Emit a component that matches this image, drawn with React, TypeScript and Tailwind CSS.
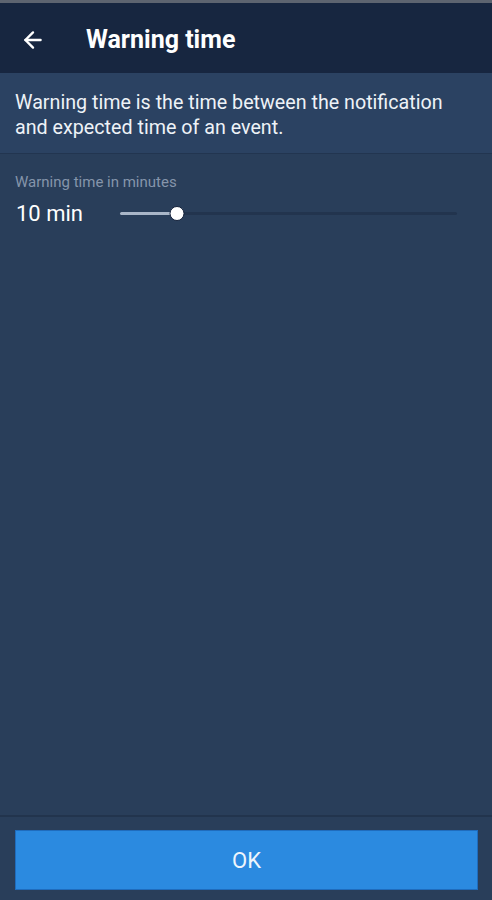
import { ArrowLeft } from 'lucide-react';

export default function App() {
  const value = 10;
  const pct = 17;

  return (
    <div className="h-[900px] w-full flex flex-col bg-[#293e5a] text-white font-['Roboto',sans-serif]">
      {/* status strip */}
      <div className="h-[3px] bg-[#5d6470]"></div>

      {/* Header */}
      <header className="h-[70px] bg-[#172640] flex items-center px-[20px] pt-[3px]">
        <ArrowLeft className="w-[26px] h-[26px]" strokeWidth={2.2} />
        <h1 className="ml-[40px] text-[25px] font-bold">Warning time</h1>
      </header>

      {/* Description */}
      <div className="bg-[#2b4262] px-[15px] pt-[17px] pb-[13px] border-b border-[#223550]">
        <p className="text-[19.7px] leading-[25px] text-[#eef2f7]">
          Warning time is the time between the notification and expected time of an event.
        </p>
      </div>

      {/* Slider */}
      <div className="flex-1 px-[16px] pt-[17px]">
        <div className="text-[15px] text-[#8595ab] -ml-[1px]">Warning time in minutes</div>
        <div className="flex items-center mt-[3px]">
          <span className="w-[104px] text-[22px] text-white">{value} min</span>
          <div className="relative flex-1 h-[20px] mr-[19px] flex items-center">
            <div className="h-[3px] w-full bg-[#22344e] rounded-full"></div>
            <div className="absolute left-0 h-[3px] bg-[#a9b6c8] rounded-full" style={{ width: `${pct}%` }}></div>
            <div
              className="absolute w-[15px] h-[15px] rounded-full bg-white border border-[#14213a] -translate-x-1/2"
              style={{ left: `${pct}%` }}
            ></div>
          </div>
        </div>
      </div>

      {/* Footer */}
      <div className="border-t-2 border-[#22344d] pt-[13px] pb-[10px] pl-[15px] pr-[14px]">
        <button className="w-full h-[60px] bg-[#2b8ae0] border border-[#1f6cbd] text-[22px] text-[#eef5fc]">
          OK
        </button>
      </div>
    </div>
  );
}
